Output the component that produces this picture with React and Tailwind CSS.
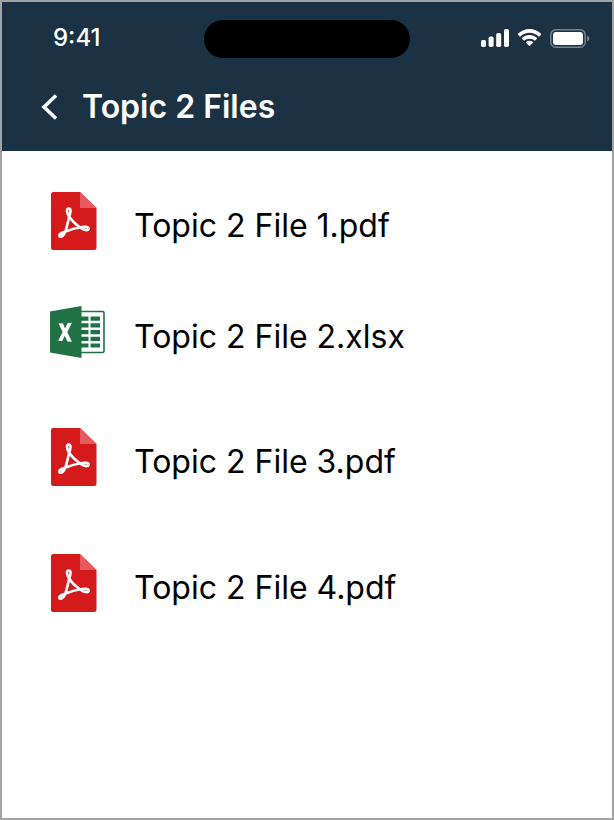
const files = [
  { name: 'Topic 2 File 1.pdf', type: 'pdf', spacing: 'mt-0' },
  { name: 'Topic 2 File 2.xlsx', type: 'xlsx', spacing: 'mt-14' },
  { name: 'Topic 2 File 3.pdf', type: 'pdf', spacing: 'mt-[70px]' },
  { name: 'Topic 2 File 4.pdf', type: 'pdf', spacing: 'mt-[68px]' },
];

const SignalIcon = () => (
  <svg width="28" height="18" viewBox="0 0 28 18" fill="white" aria-hidden="true">
    <rect x="0" y="11" width="5" height="7" rx="1.7" />
    <rect x="7.6" y="7.5" width="5" height="10.5" rx="1.7" />
    <rect x="15.2" y="4" width="5" height="14" rx="1.7" />
    <rect x="23" y="0" width="5" height="18" rx="1.7" />
  </svg>
);

const WifiIcon = () => (
  <svg width="25" height="18" viewBox="0 0 25 18" fill="white" aria-hidden="true">
    <path d="M12.5 3.8c3.4 0 6.6 1.3 9.1 3.6.2.2.5.2.7 0l1.8-1.8c.2-.2.2-.6 0-.8C17.6-1.5 7.4-1.5.9 4.8c-.2.2-.2.6 0 .8l1.8 1.8c.2.2.5.2.7 0 2.5-2.300 5.700-3.600 9.100-3.600z" />
    <path d="M12.500 9.700c1.900 0 3.700.7 5 1.900.2.2.5.2.7 0l1.800-1.800c.2-.2.2-.6 0-.8-4.200-3.900-10.800-3.900-15 0-.2.2-.2.6 0 .8l1.800 1.800c.2.2.5.2.7 0 1.300-1.200 3.100-1.900 5-1.900z" />
    <path d="M16 13.700c.2-.2.2-.6 0-.8-2-1.700-5-1.700-7 0-.2.2-.2.6 0 .8l3.100 3.100c.2.2.6.2.8 0z" />
  </svg>
);

const BatteryIcon = () => (
  <svg width="40" height="19" viewBox="0 0 40 19" fill="none" aria-hidden="true">
    <rect x="0.8" y="0.8" width="34.4" height="17.4" rx="5" stroke="white" strokeOpacity="0.4" strokeWidth="1.5" />
    <rect x="3" y="3" width="30" height="13" rx="3" fill="white" />
    <path d="M37.2 6.500v6c1.200-.5 2-1.600 2-3s-.8-2.500-2-3z" fill="white" fillOpacity="0.45" />
  </svg>
);

const PdfIcon = () => (
  <svg width="48" height="58" viewBox="0 0 48 58" fill="none" aria-hidden="true">
    <path d="M3 0h27l16.500 16V55.500a2.500 2.500 0 0 1-2.500 2.500H3.500A2.500 2.500 0 0 1 1 55.500V2.500A2.500 2.500 0 0 1 3 0z" fill="#d51a1b" />
    <path d="M30 0l16.500 16H30z" fill="#e65c5e" />
    <path
      d="M18.800 24C16.800 20.500 16 16.600 18.700 16.500C21.400 16.600 20.700 20.500 19.200 24.500C18.200 29 17 34.500 15.500 39.200C14 43 11.400 45.700 9.600 44.400C8.200 42.700 11 41 15.500 39.500C20 37.800 25 36.200 30.500 35.300C34.500 34.200 39 34.700 38.600 37C38 38.900 34 38.200 30.500 35.700C26 32.500 21.800 29 18.800 24z"
      stroke="white"
      strokeWidth="2.6"
      strokeLinejoin="round"
    />
  </svg>
);

const ExcelIcon = () => (
  <svg width="56" height="52" viewBox="0 0 56 52" aria-hidden="true">
    <rect x="28" y="5.500" width="26" height="41" rx="1.500" fill="white" stroke="#207245" strokeWidth="1.600" />
    <g fill="#207245">
      <path d="M31 10.500h7.500v4.200H31zM40.500 10.500H50v4.200h-9.500z" />
      <path d="M31 17.200h7.500v4.200H31zM40.500 17.200H50v4.200h-9.500z" />
      <path d="M31 24h7.500v4.200H31zM40.500 24H50v4.200h-9.500z" />
      <path d="M31 30.700h7.500v4.200H31zM40.500 30.700H50v4.200h-9.500z" />
      <path d="M31 37.400h7.500v4.200H31zM40.500 37.400H50v4.200h-9.500z" />
      <path d="M0 5.500L31.500 0v52L0 46.500z" />
    </g>
    <path d="M8.500 17.600l4.300-.3 2.300 5.200 2.600-5.500 4.100-.3-4.500 9.500 4.600 9.500-4.500-.3-2.600-5.700-2.500 5.300-4.100-.2 4.400-8.700z" fill="white" />
  </svg>
);

const StatusBar = () => (
  <div className="grid grid-cols-3 items-center px-[22px] pt-[18px]">
    <span className="pb-0.5 pl-[29px] text-2xl font-medium leading-9">9:41</span>
    <div className="h-[38px] w-[206px] justify-self-center rounded-full bg-black" />
    <div className="flex items-center justify-end gap-2 pb-0.5">
      <SignalIcon />
      <WifiIcon />
      <BatteryIcon />
    </div>
  </div>
);

const App = () => {
  return (
    <div className="flex min-h-screen flex-col border-2 border-[#a3a3a3] bg-white font-['Inter',sans-serif]">
      <header className="bg-[#1b3144] pb-6 text-white">
        <StatusBar />
        <div className="flex items-center gap-6 pt-[29px] pl-[39px]">
          <button type="button" aria-label="Back">
            <svg width="17" height="26" viewBox="0 0 17 26" fill="none" stroke="white" strokeWidth="3.600" aria-hidden="true">
              <path d="M15 1.500L3 13L15 24.500" />
            </svg>
          </button>
          <h1 className="text-[32px] font-semibold leading-10">Topic 2 Files</h1>
        </div>
      </header>

      <main className="px-12 pt-[41px] pb-10">
        <ul>
          {files.map((file) => (
            <li key={file.name} className={file.spacing}>
              <a href="#" className="flex items-center gap-7">
                <span className="w-14 shrink-0">
                  {file.type === 'pdf' ? <PdfIcon /> : <ExcelIcon />}
                </span>
                <span className="pt-2.5 text-[32px] leading-10 text-black">{file.name}</span>
              </a>
            </li>
          ))}
        </ul>
      </main>
    </div>
  );
};

export default App;
